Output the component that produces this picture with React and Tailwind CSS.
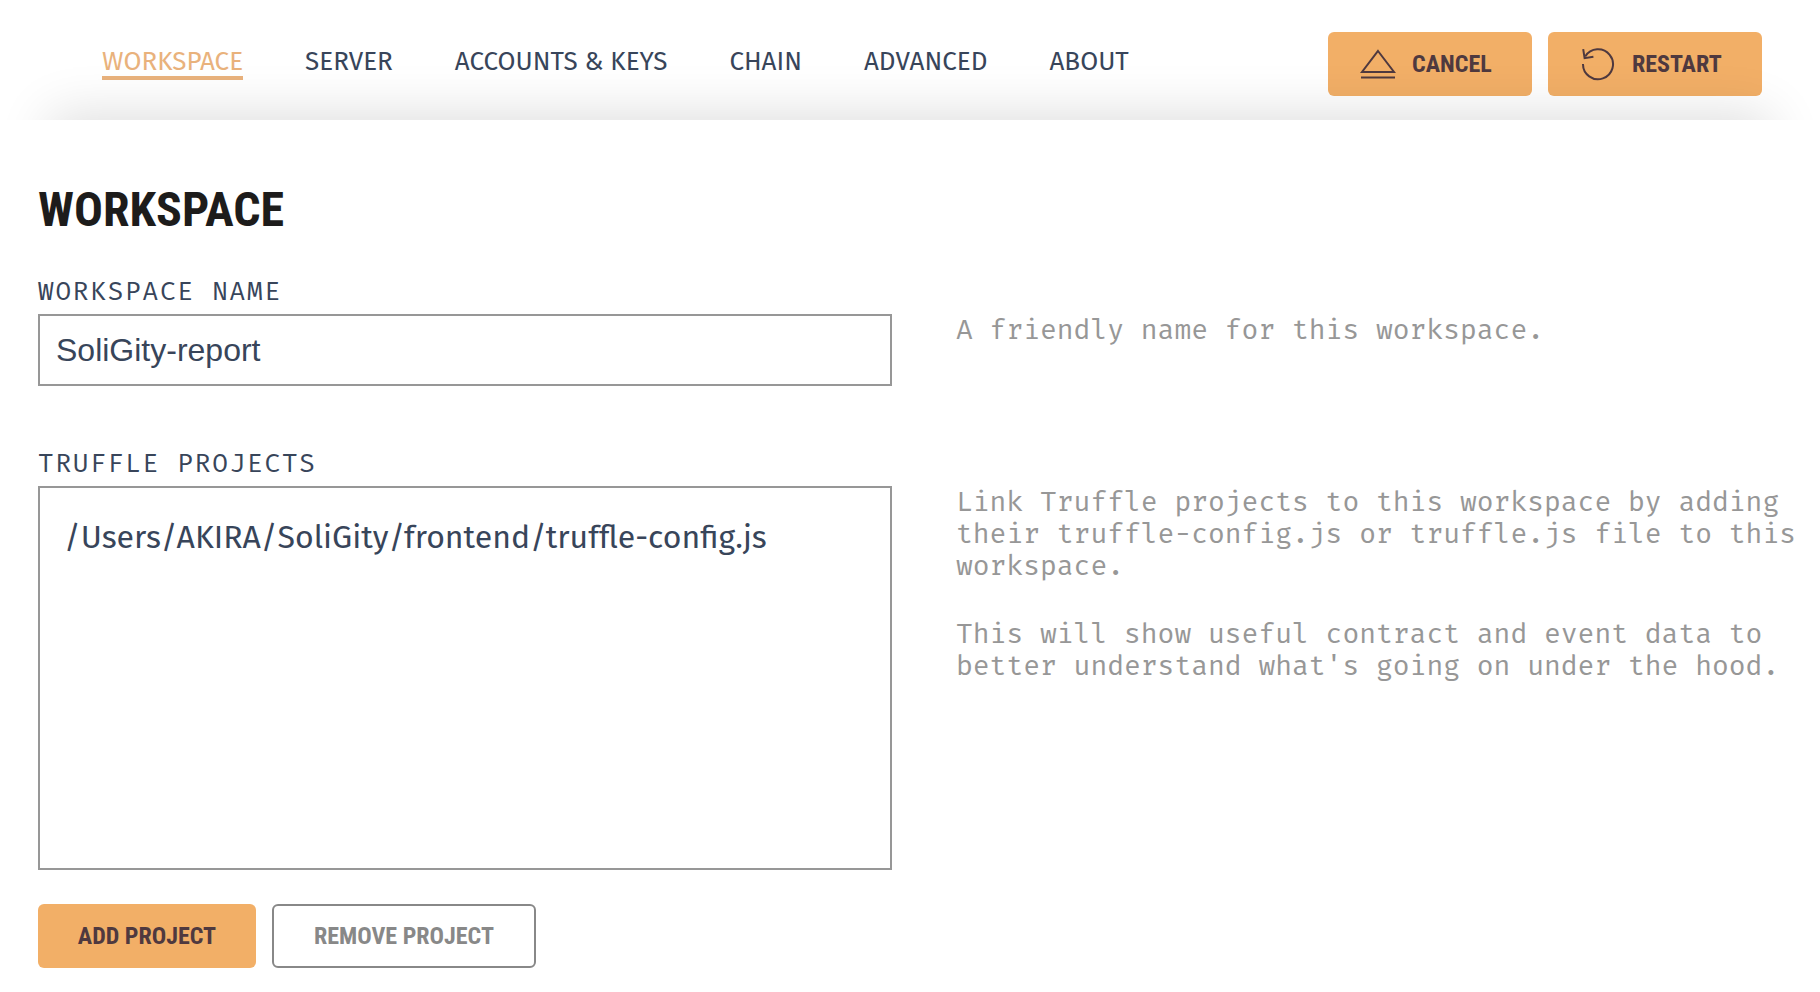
const NAV = ["WORKSPACE", "SERVER", "ACCOUNTS & KEYS", "CHAIN", "ADVANCED", "ABOUT"];

const CONDENSED = "font-['Roboto_Condensed','Liberation_Sans_Narrow',Roboto,sans-serif] font-bold";
const SANS = "font-['Fira_Sans','Noto_Sans_CJK_SC','Open_Sans',sans-serif]";
const MONO = "font-['Fira_Mono','Liberation_Mono',monospace]";
const LABEL = `mb-1 text-[26px] leading-9 tracking-[0.07em] ${MONO}`;

function CancelIcon() {
  return (
    <svg className="size-9 shrink-0" viewBox="0 0 36 36" fill="none" stroke="currentColor" strokeWidth="2" aria-hidden="true">
      <path d="M18 5 L34 26 H2 Z" />
      <path d="M1 31.5 H35" />
    </svg>
  );
}

function RestartIcon() {
  return (
    <svg className="size-9 shrink-0" viewBox="0 0 36 36" fill="none" stroke="currentColor" strokeWidth="2" aria-hidden="true">
      <path d="M3 18 A15 15 0 1 0 5.2 10.4" />
      <path d="M3.2 3.2 L4.6 12.2 L13.4 10.8" />
    </svg>
  );
}

function Button({ className, children }) {
  return (
    <button type="button" className={`flex h-16 items-center rounded-md text-2xl whitespace-nowrap ${CONDENSED} ${className}`}>
      {children}
    </button>
  );
}

function Hint({ children }) {
  return <div className={`flex flex-col gap-9 text-[28px] leading-8 text-[#979797] ${MONO}`}>{children}</div>;
}

export default function App() {
  return (
    <div className="min-h-screen bg-white text-[#38455a]">
      <header className="flex h-[120px] items-center justify-between pr-[58px] pl-[102px]">
        <nav className={`mt-2 flex items-center gap-[62px] text-[26px] leading-7 ${SANS}`}>
          {NAV.map((label, i) => (
            <a
              key={label}
              href="#"
              aria-current={i === 0 ? "page" : undefined}
              className={`border-b-4 whitespace-nowrap ${i === 0 ? "border-[#e9b27c] text-[#e9b27c]" : "border-transparent"}`}
            >
              {label}
            </a>
          ))}
        </nav>
        <div className="mt-2 flex gap-4 text-[#4f393f]">
          <Button className="w-[204px] gap-4 bg-[#f2af67] pl-8">
            <CancelIcon />
            CANCEL
          </Button>
          <Button className="w-[214px] gap-4 bg-[#f2af67] pl-8">
            <RestartIcon />
            RESTART
          </Button>
        </div>
      </header>

      <main className="relative bg-white pt-[60px] pr-[10px] pb-6 pl-[38px] shadow-[0_-55px_50px_-50px_rgba(0,0,0,0.137)]">
        <h1 className={`text-5xl leading-[60px] text-[#1d1c1b] ${CONDENSED}`}>WORKSPACE</h1>

        <label htmlFor="workspace-name" className={`mt-[34px] block ${LABEL}`}>
          WORKSPACE NAME
        </label>
        <div className="grid grid-cols-2 gap-16">
          <input
            id="workspace-name"
            type="text"
            defaultValue="SoliGity-report"
            className="h-[72px] w-full border-2 border-[#979797] px-4 font-['Liberation_Sans',Arial,sans-serif] text-[32px]"
          />
          <Hint>
            <p>A friendly name for this workspace.</p>
          </Hint>
        </div>

        <h2 id="projects-label" className={`mt-[60px] ${LABEL}`}>
          TRUFFLE PROJECTS
        </h2>
        <div className="grid grid-cols-2 gap-16">
          <ul aria-labelledby="projects-label" className={`h-[384px] border-2 border-[#979797] p-6 text-[32px] leading-[50px] ${SANS}`}>
            <li>/Users/AKIRA/SoliGity/frontend/truffle-config.js</li>
          </ul>
          <Hint>
            <p>
              Link Truffle projects to this workspace by adding their truffle-config.js or truffle.js file to this
              workspace.
            </p>
            <p>This will show useful contract and event data to better understand what's going on under the hood.</p>
          </Hint>
        </div>

        <div className="mt-[34px] flex gap-4">
          <Button className="w-[218px] justify-center bg-[#f2af67] text-[#4f393f]">ADD PROJECT</Button>
          <Button className="w-[264px] justify-center border-2 border-[#888888] text-[#888888]">REMOVE PROJECT</Button>
        </div>
      </main>
    </div>
  );
}
